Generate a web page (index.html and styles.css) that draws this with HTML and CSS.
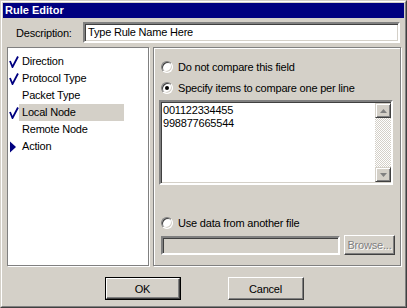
FILE: index.html
```html
<!DOCTYPE html>
<html>
<head>
<meta charset="utf-8">
<link rel="stylesheet" href="styles.css">
</head>
<body>
<div class="window">
  <div class="frame">
    <div class="titlebar">Rule Editor</div>
    <div class="desc-row">
      <span class="desc-label">Description:</span>
      <div class="sunken desc-input">Type Rule Name Here</div>
    </div>
    <div class="main">
      <div class="list">
        <div class="item"><span class="icon"><svg width="10" height="12" viewBox="0 0 10 12"><path d="M1 5 L3.5 11 L9 0.5" fill="none" stroke="#000080" stroke-width="1.8"/></svg></span><span class="label">Direction</span></div>
        <div class="item"><span class="icon"><svg width="10" height="12" viewBox="0 0 10 12"><path d="M1 5 L3.5 11 L9 0.5" fill="none" stroke="#000080" stroke-width="1.8"/></svg></span><span class="label">Protocol Type</span></div>
        <div class="item"><span class="icon"></span><span class="label">Packet Type</span></div>
        <div class="item"><span class="icon"><svg width="10" height="12" viewBox="0 0 10 12"><path d="M1 5 L3.5 11 L9 0.5" fill="none" stroke="#000080" stroke-width="1.8"/></svg></span><span class="label selected">Local Node</span></div>
        <div class="item"><span class="icon"></span><span class="label">Remote Node</span></div>
        <div class="item"><span class="icon"><svg width="8" height="12" viewBox="0 0 8 12"><path d="M1 0.5 L7 6 L1 11.5 Z" fill="#000080"/></svg></span><span class="label">Action</span></div>
      </div>
      <div class="panel">
        <div class="radio-row first"><span class="radio"></span><span>Do not compare this field</span></div>
        <div class="radio-row second"><span class="radio checked"></span><span>Specify items to compare one per line</span></div>
        <div class="sunken textarea">
          <div class="text">001122334455<br>998877665544</div>
          <div class="scrollbar">
            <div class="sbtn"><svg width="7" height="4" viewBox="0 0 7 4"><path d="M3.5 0 L7 4 L0 4 Z" fill="#808080"/></svg></div>
            <div class="track"></div>
            <div class="sbtn"><svg width="7" height="4" viewBox="0 0 7 4"><path d="M0 0 L7 0 L3.5 4 Z" fill="#808080"/></svg></div>
          </div>
        </div>
        <div class="radio-row third"><span class="radio"></span><span>Use data from another file</span></div>
        <div class="file-row">
          <div class="sunken file-field"></div>
          <div class="button browse">Browse...</div>
        </div>
      </div>
    </div>
    <div class="footer">
      <div class="button default"><div class="button inner-btn">OK</div></div>
      <div class="button">Cancel</div>
    </div>
  </div>
</div>
</body>
</html>
```
FILE: styles.css
```css
* { box-sizing: border-box; }
html, body { margin: 0; padding: 0; background: #d4d0c8; }
body {
  font-family: "Liberation Sans", Arial, sans-serif;
  font-size: 11px;
  letter-spacing: -0.2px;
  color: #000;
}
.window {
  width: 407px;
  height: 308px;
  border: 1px solid;
  border-color: #d4d0c8 #404040 #404040 #d4d0c8;
  background: #d4d0c8;
}
.frame {
  width: 100%;
  height: 100%;
  border: 1px solid;
  border-color: #fff #808080 #808080 #fff;
  padding: 1px;
}
.titlebar {
  height: 15px;
  background: #000080;
  color: #fff;
  font-weight: bold;
  letter-spacing: 0;
  line-height: 15px;
  padding-left: 2px;
}
.desc-row {
  display: flex;
  align-items: center;
  margin-top: 4px;
  height: 21px;
}
.desc-label {
  width: 80px;
  padding-left: 13px;
}
.sunken {
  border: 2px solid;
  border-color: #808080 #fff #fff #808080;
  box-shadow: inset 1px 1px 0 #404040, inset -1px -1px 0 #d4d0c8;
}
.desc-input {
  width: 317px;
  height: 21px;
  background: #fff;
  line-height: 17px;
  padding-left: 3px;
}
.main {
  display: flex;
  margin-top: 4px;
  padding-left: 4px;
  gap: 4px;
}
.list {
  width: 142px;
  height: 219px;
  background: #fff;
  border: 1px solid #808080;
  box-shadow: 1px 1px 0 #fff;
  padding-top: 5px;
}
.item {
  display: flex;
  height: 17px;
  align-items: center;
}
.icon {
  width: 11px;
  height: 17px;
  display: flex;
  align-items: center;
  padding-left: 1px;
}
.label {
  width: 105px;
  height: 17px;
  line-height: 17px;
  padding-left: 3px;
}
.label.selected { background: #d4d0c8; }
.panel {
  width: 248px;
  height: 219px;
  border: 1px solid #808080;
  box-shadow: inset 1px 1px 0 #fff, 1px 1px 0 #fff;
  padding-left: 5px;
  padding-top: 11px;
}
.radio-row {
  display: flex;
  align-items: center;
  height: 16px;
  margin-left: 2px;
  gap: 5px;
}
.radio-row.second { margin-top: 5px; }
.radio-row.third { margin-top: 30px; }
.radio {
  width: 12px;
  height: 12px;
  border-radius: 50%;
  border: 1px solid;
  border-color: #808080 #fff #fff #808080;
  box-shadow: inset 1px 1px 0 #404040, inset -1px -1px 0 #d4d0c8;
  background: #fff;
  display: flex;
  align-items: center;
  justify-content: center;
  flex: none;
}
.radio.checked::after {
  content: "";
  width: 4px;
  height: 4px;
  border-radius: 50%;
  background: #000;
}
.textarea {
  margin-top: 4px;
  width: 234px;
  height: 85px;
  background: #fff;
  display: flex;
}
.text {
  flex: 1;
  padding: 2px 0 0 2px;
  line-height: 13px;
}
.scrollbar {
  width: 16px;
  display: flex;
  flex-direction: column;
  margin: 1px 0 1px 0;
}
.sbtn {
  height: 15px;
  border: 1px solid;
  border-color: #d4d0c8 #404040 #404040 #d4d0c8;
  box-shadow: inset 1px 1px 0 #fff, inset -1px -1px 0 #808080;
  background: #d4d0c8;
  display: flex;
  align-items: center;
  justify-content: center;
}
.track {
  flex: 1;
  background-color: #fff;
  background-image: repeating-conic-gradient(#d4d0c8 0 25%, #fff 0 50%);
  background-size: 2px 2px;
}
.file-row {
  display: flex;
  align-items: flex-start;
  margin-top: 4px;
  margin-left: 2px;
  gap: 4px;
}
.file-field {
  width: 179px;
  height: 19px;
  margin-top: 1px;
  background: #d4d0c8;
}
.button {
  width: 76px;
  height: 23px;
  border: 1px solid;
  border-color: #fff #404040 #404040 #fff;
  box-shadow: inset -1px -1px 0 #808080;
  background: #d4d0c8;
  display: flex;
  align-items: center;
  justify-content: center;
}
.browse {
  width: 51px;
  height: 20px;
  color: #808080;
  text-shadow: 1px 1px 0 #fff;
}
.footer {
  display: flex;
  justify-content: center;
  gap: 47px;
  margin-top: 11px;
  padding-left: 1px;
}
.button.default {
  border: 1px solid #000;
  box-shadow: none;
  padding: 0;
}
.inner-btn {
  width: 74px;
  height: 21px;
}
```
